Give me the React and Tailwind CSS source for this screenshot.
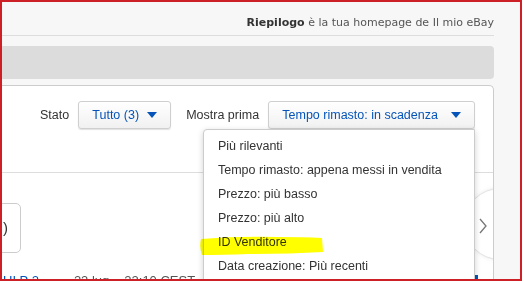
import React from 'react';

const Caret = () => (
  <svg width="10" height="6" viewBox="0 0 10 6" className="shrink-0">
    <path d="M0 0 L10 0 L5 6 Z" fill="#0654ba" />
  </svg>
);

const sortOptions = [
  'Più rilevanti',
  'Tempo rimasto: appena messi in vendita',
  'Prezzo: più basso',
  'Prezzo: più alto',
  'ID Venditore',
  'Data creazione: Più recenti',
];

const App = () => {
  return (
    <div className="w-[524px] h-[282px] bg-white overflow-hidden font-['Liberation_Sans',Arial,sans-serif]">
      {/* red annotation frame */}
      <div className="relative w-[522px] h-[281px] border-2 border-[#cc1f26] bg-[#f7f7f7] overflow-hidden">
        <div className="w-[492px] h-full flex flex-col">
          {/* header line */}
          <div className="h-[34px] shrink-0 border-b border-[#dddddd] flex justify-end pt-[14px]">
            <p className="text-[11px] leading-[13px] text-[#555] font-['DejaVu_Sans',Verdana,sans-serif] whitespace-nowrap">
              <span className="font-bold text-[#333]">Riepilogo</span> è la tua homepage de Il mio eBay
            </p>
          </div>

          {/* grey bar */}
          <div className="mt-[10px] h-[33px] shrink-0 bg-[#dcdcdc] rounded-r-[4px]" />

          {/* main panel */}
          <div className="relative mt-[6px] flex-1 bg-white border-t border-r border-[#cccccc] rounded-tr-[5px] overflow-hidden">
            <div className="flex items-center pt-[15px] pl-[38px] text-[12.5px] text-[#333]">
              <span>Stato</span>
              <button className="ml-[9px] w-[93px] h-[28px] flex items-center justify-center gap-[8px] rounded-[3px] border border-[#cfcfcf] bg-gradient-to-b from-white to-[#f1f1f1] shadow-[0_1px_1px_rgba(0,0,0,0.12)] text-[#0654ba]">
                <span>Tutto (3)</span>
                <Caret />
              </button>
              <span className="ml-[15px]">Mostra prima</span>
              <button className="ml-[9px] w-[207px] h-[28px] flex items-center justify-center gap-[13px] rounded-[3px] border border-[#cfcfcf] bg-gradient-to-b from-white to-[#f1f1f1] shadow-[0_1px_1px_rgba(0,0,0,0.12)] text-[#0654ba]">
                <span>Tempo rimasto: in scadenza</span>
                <Caret />
              </button>
            </div>

            <div className="mt-[43px] h-px bg-[#dddddd]" />

            {/* item card, cropped on the left */}
            <div className="mt-[30px] ml-[-41px] w-[60px] h-[50px] border border-[#cccccc] rounded-[5px] flex items-center justify-end pr-[12px] text-[15px] text-[#333]">
              )
            </div>

            <div className="mt-[20px] flex items-start text-[13px] leading-[15px] whitespace-nowrap">
              <span className="ml-[1px] text-[#0654ba]">UI P 2</span>
              <span className="ml-[35px] text-[#555]">23 lug</span>
              <span className="ml-[15px] text-[#555]">22:10 CEST</span>
            </div>

            {/* carousel next button */}
            <div className="absolute left-[462px] top-[102px] w-[72px] h-[72px] rounded-full bg-white border border-[#e2e2e2] shadow-[0_0_4px_rgba(0,0,0,0.08)]" />
            <svg className="absolute left-[476px] top-[132px]" width="10" height="16" viewBox="0 0 10 16">
              <path d="M2 1 L8 8 L2 15" fill="none" stroke="#777" strokeWidth="1.3" />
            </svg>
            <div className="absolute left-[472px] top-[189px] w-[4px] h-[6px] bg-[#0654ba]" />
          </div>
        </div>

        {/* sort dropdown menu */}
        <div className="absolute left-[201px] top-[127px] w-[272px] h-[200px] bg-white border border-[#cccccc] rounded-tl-[4px] shadow-[0_2px_6px_rgba(0,0,0,0.18)] pt-[4px]">
          {sortOptions.map((opt) => (
            <div key={opt} className="h-[24px] leading-[24px] pl-[14px] text-[12.5px] text-[#333] whitespace-nowrap">
              {opt}
            </div>
          ))}
        </div>

        {/* yellow marker highlight */}
        <svg className="absolute left-[196px] top-[233px] mix-blend-multiply" width="128" height="22" viewBox="0 0 128 22">
          <path d="M3 4 Q40 1 80 2 Q105 2 124 3 L125 17 Q90 19 50 19 Q25 20 4 20 Q1 12 3 4 Z" fill="#ffff00" />
        </svg>
      </div>
    </div>
  );
};

export default App;
